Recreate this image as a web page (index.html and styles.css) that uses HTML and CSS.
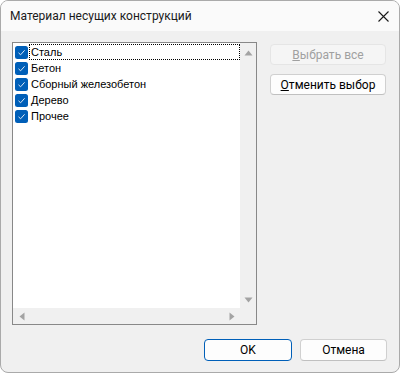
FILE: index.html
```html
<!DOCTYPE html>
<html lang="ru">
<head>
  <meta charset="UTF-8">
  <title>Материал несущих конструкций</title>
  <link rel="stylesheet" href="styles.css">
</head>
<body>
  <div class="window">
    <div class="titlebar">
      <span class="title">Материал несущих конструкций</span>
      <svg class="close" width="11" height="11" viewBox="0 0 11 11">
        <path d="M0.5 0.5L10.5 10.5M10.5 0.5L0.5 10.5" stroke="#1a1a1a" stroke-width="1.1" fill="none"/>
      </svg>
    </div>

    <div class="body">
      <div class="main">
        <div class="listbox">
          <ul class="items" id="items"></ul>
          <div class="vscroll">
            <svg width="9" height="6" viewBox="0 0 9 6"><path d="M4.5 0.5L8.5 5.5H0.5Z" fill="#a3a3a3"/></svg>
            <svg width="9" height="6" viewBox="0 0 9 6"><path d="M4.5 5.5L8.5 0.5H0.5Z" fill="#a3a3a3"/></svg>
          </div>
          <div class="hscroll">
            <svg width="6" height="9" viewBox="0 0 6 9"><path d="M0.5 4.5L5.5 0.5V8.5Z" fill="#a3a3a3"/></svg>
            <svg width="6" height="9" viewBox="0 0 6 9"><path d="M5.5 4.5L0.5 0.5V8.5Z" fill="#a3a3a3"/></svg>
          </div>
          <div class="corner"></div>
        </div>

        <div class="side">
          <button class="btn" disabled><u>В</u>ыбрать все</button>
          <button class="btn"><u>О</u>тменить выбор</button>
        </div>
      </div>

      <div class="footer">
        <button class="btn default">OK</button>
        <button class="btn">Отмена</button>
      </div>
    </div>
  </div>

  <script>
    const materials = ['Сталь', 'Бетон', 'Сборный железобетон', 'Дерево', 'Прочее'];

    function renderItems() {
      const list = document.getElementById('items');
      materials.forEach((name, i) => {
        const item = document.createElement('li');
        item.classList.add('item');

        item.innerHTML = `
          <svg class="check" width="13" height="13" viewBox="0 0 13 13">
            <rect x="0" y="0" width="13" height="13" rx="2.5" fill="#005fb8"/>
            <path d="M3.5 6.8L5.6 8.8L9.6 4.3" stroke="#dce8f5" stroke-width="1" fill="none"/>
          </svg>
          <span class="label${i === 0 ? ' focused' : ''}">${name}</span>
        `;
        list.appendChild(item);
      });
    }

    renderItems();
  </script>
</body>
</html>
```

FILE: styles.css
```css
* {
  margin: 0;
  padding: 0;
  box-sizing: border-box;
}

body {
  background-color: #ffffff;
  font-family: Roboto, sans-serif;
  font-size: 12px;
  color: #000000;
}

.window {
  width: 400px;
  height: 373px;
  border: 1px solid #aaaaaa;
  border-radius: 8px;
  overflow: hidden;
  background-color: #f0f0f0;
  display: flex;
  flex-direction: column;
}

.titlebar {
  height: 30px;
  background-color: #fafafa;
  display: flex;
  align-items: center;
  justify-content: space-between;
  padding: 0 10px 0 9px;
}

.title {
  font-size: 12px;
  color: #1a1a1a;
}

.body {
  flex-grow: 1;
  padding: 11px 12px 0 11px;
  display: flex;
  flex-direction: column;
}

.main {
  display: flex;
  gap: 13px;
}

.listbox {
  width: 245px;
  height: 283px;
  border: 1px solid #888888;
  background-color: #ffffff;
  display: grid;
  grid-template-columns: 1fr 16px;
  grid-template-rows: 1fr 16px;
}

.items {
  list-style: none;
  padding: 1px 0 0 2px;
}

.item {
  display: flex;
  align-items: center;
  height: 16px;
}

.check {
  flex-shrink: 0;
}

.label {
  flex-grow: 1;
  height: 16px;
  margin-left: 1px;
  padding-left: 1px;
  border: 1px dotted transparent;
  font-family: 'Liberation Sans', sans-serif;
  font-size: 11px;
  line-height: 14px;
  white-space: nowrap;
}

.label.focused {
  border-color: #000000;
}

.vscroll {
  background-color: #f0f0f0;
  display: flex;
  flex-direction: column;
  justify-content: space-between;
  align-items: center;
  padding: 7px 0 5px;
}

.hscroll {
  background-color: #f0f0f0;
  display: flex;
  justify-content: space-between;
  align-items: center;
  padding: 0 5px 0 6px;
}

.corner {
  background-color: #f0f0f0;
}

.side {
  width: 116px;
  padding-top: 2px;
  display: flex;
  flex-direction: column;
  gap: 9px;
}

.btn {
  height: 21px;
  font-family: Roboto, sans-serif;
  font-size: 12px;
  color: #000000;
  background-color: #fdfdfd;
  border: 1px solid #d0d0d0;
  border-bottom-color: #c0c0c0;
  border-radius: 4px;
}

.btn:disabled {
  color: #a0a0a0;
  background-color: #f5f5f5;
  border-color: #e5e5e5;
}

.footer {
  display: flex;
  justify-content: flex-end;
  gap: 8px;
  margin-top: 14px;
}

.footer .btn {
  width: 87px;
  height: 22px;
}

.btn.default {
  width: 88px;
  border-color: #005fb8;
}
```
